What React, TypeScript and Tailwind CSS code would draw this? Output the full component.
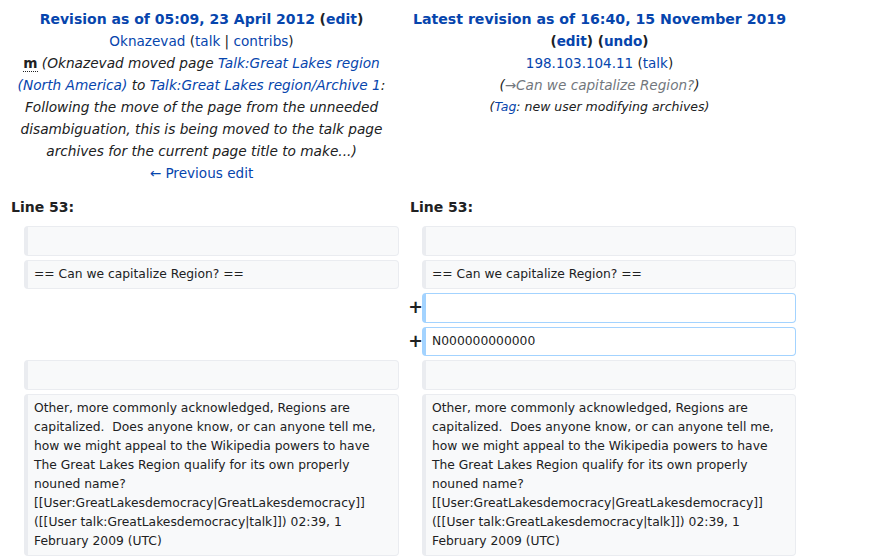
import React from "react";

const LINK = "text-[#0645ad]";

function Ctx({ children }: { children?: React.ReactNode }) {
  return (
    <div className="rounded-[4px] border border-l-4 border-[#eaecf0] bg-[#f8f9fa] px-[6px] py-[4.25px] text-[12.32px] leading-[19px] text-[#202122] whitespace-pre-wrap min-h-[29.5px]">
      {children ?? "\u200b"}
    </div>
  );
}

function Added({ children }: { children?: React.ReactNode }) {
  return (
    <div className="rounded-[4px] border border-l-4 border-[#a3d3ff] bg-white px-[6px] py-[4.25px] text-[12.32px] leading-[19px] text-[#202122] whitespace-pre-wrap min-h-[29.5px]">
      {children ?? "\u200b"}
    </div>
  );
}

function Plus() {
  return (
    <div className="flex justify-end pt-[4px] text-[17.5px] leading-[21px] font-bold text-[#202122] -mr-[5px]">
      +
    </div>
  );
}

const longText =
  "Other, more commonly acknowledged, Regions are\ncapitalized.  Does anyone know, or can anyone tell me,\nhow we might appeal to the Wikipedia powers to have\nThe Great Lakes Region qualify for its own properly\nnouned name?\n[[User:GreatLakesdemocracy|GreatLakesdemocracy]]\n([[User talk:GreatLakesdemocracy|talk]]) 02:39, 1\nFebruary 2009 (UTC)";

export default function App() {
  return (
    <div className="w-[874px] h-[559px] overflow-hidden bg-white font-['DejaVu_Sans',sans-serif] text-[14px] text-[#202122]">
      <div className="grid grid-cols-[16px_375px_15px_374px] gap-[4px] p-[4px]">
        {/* Header left */}
        <div className="col-span-2 py-[4px] px-[7px] text-center leading-[22px]">
          <div className="whitespace-nowrap">
            <span className={`font-bold ${LINK}`}>Revision as of 05:09, 23 April 2012</span>{" "}
            <span className="font-bold">
              (<span className={LINK}>edit</span>)
            </span>
          </div>
          <div className="text-[13.6px]">
            <span className={LINK}>Oknazevad</span> (<span className={LINK}>talk</span> |{" "}
            <span className={LINK}>contribs</span>)
          </div>
          <div className="text-[13.7px]">
            <span className="font-bold border-b border-dotted border-[#202122]">m</span>{" "}
            <span className="italic">
              (Oknazevad moved page <span className={LINK}>Talk:Great Lakes region</span>
              <br />
              <span className={LINK}>(North America)</span> to{" "}
              <span className={LINK}>Talk:Great Lakes region/Archive 1</span>:
              <br />
              Following the move of the page from the unneeded
              <br />
              disambiguation, this is being moved to the talk page
              <br />
              archives for the current page title to make...)
            </span>
          </div>
          <div className="text-[13.6px]">
            <span className={LINK}>← Previous edit</span>
          </div>
        </div>
        {/* Header right */}
        <div className="col-span-2 py-[4px] px-[7px] text-center leading-[22px]">
          <div className="whitespace-nowrap text-[14.15px]">
            <span className={`font-bold ${LINK}`}>Latest revision as of 16:40, 15 November 2019</span>
          </div>
          <div className="font-bold text-[13.6px]">
            (<span className={LINK}>edit</span>) (<span className={LINK}>undo</span>)
          </div>
          <div className="text-[13.5px]">
            <span className={LINK}>198.103.104.11</span> (<span className={LINK}>talk</span>)
          </div>
          <div className="italic text-[13.6px]">
            (<span className="text-[#72777d]">→Can we capitalize Region?</span>)
          </div>
          <div className="italic text-[12.5px]">
            (<span className={LINK}>Tag</span>: new user modifying archives)
          </div>
        </div>

        {/* Line numbers */}
        <div className="col-span-2 py-[4px] px-[7px] font-bold leading-[22px]">Line 53:</div>
        <div className="col-span-2 py-[4px] px-[7px] font-bold leading-[22px]">Line 53:</div>

        {/* Row 1 */}
        <div />
        <Ctx />
        <div />
        <Ctx />

        {/* Row 2 */}
        <div />
        <Ctx>== Can we capitalize Region? ==</Ctx>
        <div />
        <Ctx>== Can we capitalize Region? ==</Ctx>

        {/* Row 3 */}
        <div />
        <div />
        <Plus />
        <Added />

        {/* Row 4 */}
        <div />
        <div />
        <Plus />
        <Added>N000000000000</Added>

        {/* Row 5 */}
        <div />
        <Ctx />
        <div />
        <Ctx />

        {/* Row 6 */}
        <div />
        <Ctx>{longText}</Ctx>
        <div />
        <Ctx>{longText}</Ctx>
      </div>
    </div>
  );
}
